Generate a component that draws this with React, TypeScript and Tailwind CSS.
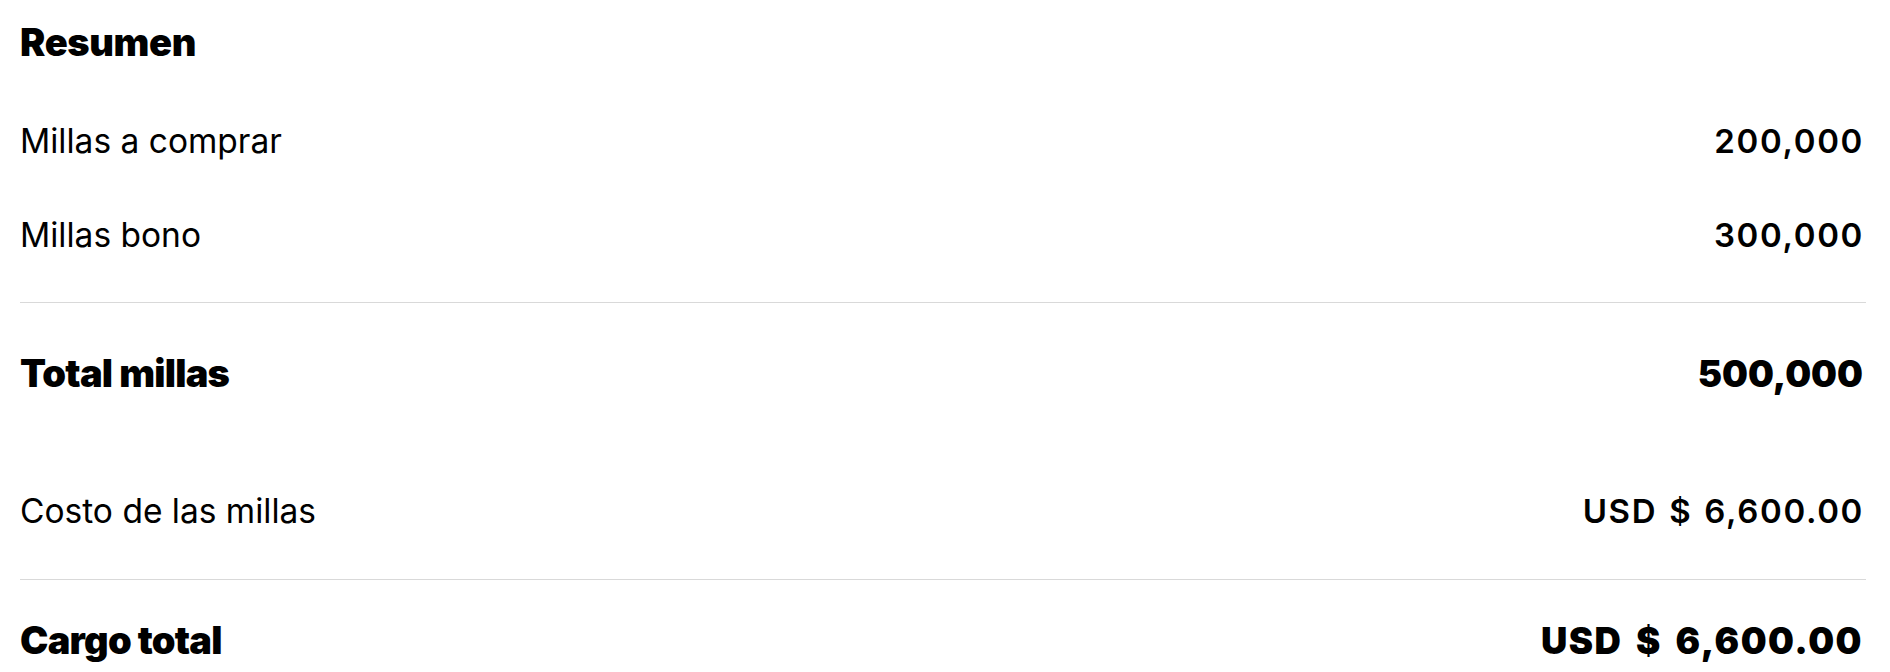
const rows = [
  { label: "Millas a comprar", value: "200,000" },
  { label: "Millas bono", value: "300,000" },
];

function Row({ label, value, strong, wide, className }: { label: string; value: string; strong?: boolean; wide?: boolean; className?: string }) {
  if (strong) {
    return (
      <div className={`flex justify-between items-baseline font-black ${className ?? ""}`}>
        <span className="text-[38px] leading-[46px] tracking-[-0.02em]">{label}</span>
        <span className={`mr-[3px] text-[36.5px] leading-[46px] ${wide ? "tracking-[0.04em] [word-spacing:5px]" : ""}`}>{value}</span>
      </div>
    );
  }
  return (
    <div className={`flex justify-between items-baseline text-[33.5px] leading-[40px] ${className ?? ""}`}>
      <span className="font-normal">{label}</span>
      <span className="mr-[2px] text-[33px] font-semibold tracking-[0.05em] [word-spacing:2px]">{value}</span>
    </div>
  );
}

export default function App() {
  return (
    <div className="min-h-[672px] w-full bg-white text-black pl-5 pr-6 pt-5 font-['Inter','Liberation_Sans',sans-serif]">
      <h2 className="text-[38px] leading-[44px] font-black tracking-[-0.01em]">Resumen</h2>

      <Row label={rows[0].label} value={rows[0].value} className="mt-[57px]" />
      <Row label={rows[1].label} value={rows[1].value} className="mt-[54px]" />

      <div className="mt-[47px] border-t border-[#d9d9d9]" />

      <Row label="Total millas" value="500,000" strong className="mt-[47px]" />
      <Row label="Costo de las millas" value="USD $ 6,600.00" className="mt-[94px]" />

      <div className="mt-[48px] border-t border-[#d9d9d9]" />

      <Row label="Cargo total" value="USD $ 6,600.00" strong wide className="mt-[37px]" />
    </div>
  );
}
